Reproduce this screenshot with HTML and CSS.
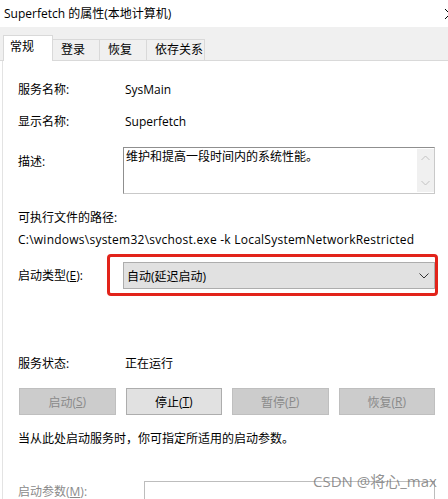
FILE: index.html
```html
<!DOCTYPE html>
<html lang="zh-CN">
<head>
<meta charset="utf-8">
<title>Superfetch 的属性</title>
<link rel="stylesheet" href="styles.css">
</head>
<body>
<div class="window">
  <div class="titlebar">
    <span class="title">Superfetch 的属性(本地计算机)</span>
    <svg class="close" width="12" height="12" viewBox="0 0 12 12"><path d="M1 1 L11 11 M11 1 L1 11" stroke="#000" stroke-width="1" fill="none"/></svg>
  </div>
  <div class="tabstrip">
    <div class="tab active">常规</div>
    <div class="tab">登录</div>
    <div class="tab">恢复</div>
    <div class="tab">依存关系</div>
  </div>
  <div class="panel">
    <div class="row r1">
      <div class="label">服务名称:</div>
      <div class="value">SysMain</div>
    </div>
    <div class="row r2">
      <div class="label">显示名称:</div>
      <div class="value">Superfetch</div>
    </div>
    <div class="row r3">
      <div class="label desc-label">描述:</div>
      <div class="textarea">
        <div class="ta-text">维护和提高一段时间内的系统性能。</div>
        <div class="scrollbar">
          <svg width="9" height="6" viewBox="0 0 9 6"><path d="M0.5 5 L4.5 1 L8.5 5" stroke="#c2c2c2" stroke-width="1" fill="none"/></svg>
          <svg width="9" height="6" viewBox="0 0 9 6"><path d="M0.5 1 L4.5 5 L8.5 1" stroke="#c2c2c2" stroke-width="1" fill="none"/></svg>
        </div>
      </div>
    </div>
    <div class="path-label">可执行文件的路径:</div>
    <div class="path">C:\windows\system32\svchost.exe -k LocalSystemNetworkRestricted</div>
    <div class="row r4">
      <div class="label">启动类型(<u>E</u>):</div>
      <div class="combo">
        <span>自动(延迟启动)</span>
        <svg width="10" height="6" viewBox="0 0 10 6"><path d="M0.5 0.5 L5 5 L9.5 0.5" stroke="#333" stroke-width="1" fill="none"/></svg>
        <div class="highlight"></div>
      </div>
    </div>
    <div class="row r5">
      <div class="label">服务状态:</div>
      <div class="value">正在运行</div>
    </div>
    <div class="buttons">
      <div class="btn disabled">启动(<u>S</u>)</div>
      <div class="btn">停止(<u>T</u>)</div>
      <div class="btn disabled">暂停(<u>P</u>)</div>
      <div class="btn disabled">恢复(<u>R</u>)</div>
    </div>
    <div class="info">当从此处启动服务时，你可指定所适用的启动参数。</div>
    <div class="row r6">
      <div class="label disabled-text">启动参数(<u>M</u>):</div>
      <div class="input"></div>
    </div>
  </div>
  <div class="watermark">CSDN @将心_max</div>
</div>
</body>
</html>
```
FILE: styles.css
```css
* { box-sizing: border-box; }
html, body {
  margin: 0;
  padding: 0;
  width: 448px;
  height: 499px;
  overflow: hidden;
  background: #ffffff;
}
body {
  font-family: "Open Sans", "Noto Sans CJK SC", sans-serif;
  font-size: 12px;
  color: #000;
}
.window {
  position: relative;
  width: 448px;
  height: 499px;
  overflow: hidden;
}
.titlebar {
  height: 27px;
  display: flex;
  align-items: center;
  justify-content: space-between;
  padding-left: 4px;
  background: #fff;
}
.title {
  font-size: 12px;
  line-height: 16px;
}
.close {
  margin-right: -8px;
  flex: none;
}
.tabstrip {
  height: 34px;
  background: #f0f0f0;
  display: flex;
  align-items: flex-end;
  padding-left: 3px;
  border-bottom: 1px solid #d9d9d9;
}
.tab {
  height: 21px;
  padding: 0 0 0 8px;
  width: 47px;
  line-height: 19px;
  border: 1px solid #d9d9d9;
  border-bottom: none;
  border-left: none;
  background: #f0f0f0;
}
.tab:nth-child(4) { width: 58px; }
.tab.active {
  height: 26px;
  width: 50px;
  border-left: 1px solid #d9d9d9;
  background: #fff;
  line-height: 22px;
  padding-left: 6px;
  margin-bottom: -1px;
  position: relative;
}
.panel {
  margin-left: 2px;
  border-left: 1px solid #e3e3e3;
  height: 438px;
  padding: 21px 0 0 15px;
  background: #fff;
}
.row {
  display: grid;
  grid-template-columns: 105px 312px;
  align-items: center;
  width: 417px;
}
.label, .value, .path-label, .path, .info {
  line-height: 16px;
  white-space: nowrap;
}
.value { padding-left: 2px; }
.r2 { margin-top: 16px; }
.r3 { margin-top: 17px; align-items: start; }
.desc-label { margin-top: 7px; }
.textarea {
  height: 47px;
  border: 1px solid #8f8f8f;
  border-color: #8f8f8f #c9c9c9 #c9c9c9 #8f8f8f;
  display: flex;
  justify-content: space-between;
  background: #fff;
}
.ta-text {
  padding: 1px 0 0 2px;
  line-height: 16px;
}
.scrollbar {
  width: 17px;
  margin: 1px 0;
  background: #f0f0f0;
  display: flex;
  flex-direction: column;
  justify-content: space-between;
  align-items: center;
  padding: 6px 0;
}
.path-label { margin-top: 16px; }
.path { margin-top: 6px; letter-spacing: 0.24px; }
.r4 { margin-top: 14px; }
.combo {
  position: relative;
  height: 27px;
  background: #e1e1e1;
  border: 1px solid #adadad;
  display: flex;
  align-items: center;
  justify-content: space-between;
  padding: 0 5px 0 3px;
}
.highlight {
  position: absolute;
  left: -17px;
  right: -4px;
  top: -9px;
  bottom: -8px;
  border: 3px solid #e2231a;
  border-radius: 4px;
}
.r5 { margin-top: 67px; }
.buttons {
  margin-top: 16px;
  margin-left: 1px;
  width: 416px;
  display: grid;
  grid-template-columns: repeat(4, 1fr);
  gap: 10px;
}
.btn {
  height: 27px;
  border: 1px solid #adadad;
  background: #e1e1e1;
  display: flex;
  align-items: center;
  justify-content: center;
}
.btn.disabled {
  background: #cccccc;
  border-color: #bfbfbf;
  color: #8a8a8a;
}
.info { margin-top: 16px; }
.r6 {
  margin-top: 34px;
  align-items: start;
  grid-template-columns: 126px 291px;
}
.disabled-text { color: #8a8a8a; margin-top: 3px; }
.input {
  height: 40px;
  border: 1px solid #bdbdbd;
  background: #fff;
}
u { text-decoration: underline; text-underline-offset: 1px; }
.watermark {
  position: absolute;
  left: 313px;
  top: 471px;
  font-size: 15px;
  line-height: 20px;
  color: rgba(110, 110, 110, 0.75);
  white-space: nowrap;
}
```
